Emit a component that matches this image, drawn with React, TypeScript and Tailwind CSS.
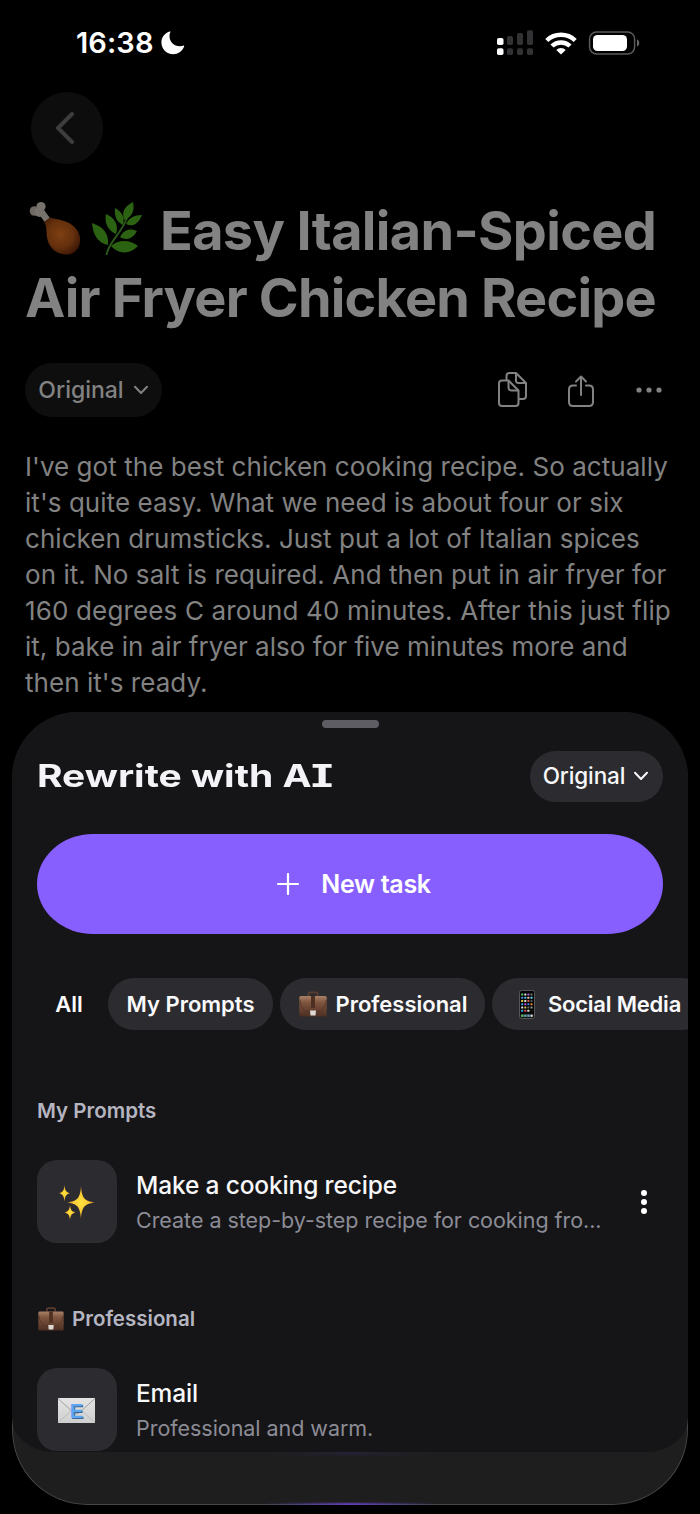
import React from 'react';
import clsx from 'clsx';

const Chevron: React.FC<{ className?: string }> = ({ className }) => (
  <svg viewBox="0 0 16 10" className={clsx('w-4 h-2.5', className)} fill="none" stroke="currentColor" strokeWidth="2" strokeLinecap="round" strokeLinejoin="round">
    <path d="M2 1.8 8 8 14 1.8" />
  </svg>
);

const Drumstick = () => (
  <svg viewBox="0 0 54 56" className="w-[54px] h-14" fill="none">
    <defs>
      <radialGradient id="meat" cx="0.45" cy="0.45" r="0.6">
        <stop offset="0" stopColor="#7d4012" />
        <stop offset="0.6" stopColor="#65300d" />
        <stop offset="1" stopColor="#3e1806" />
      </radialGradient>
    </defs>
    <path d="M11 9 19 20" stroke="#77726c" strokeWidth="6.5" />
    <circle cx="12" cy="5.500" r="4.600" fill="#77726c" />
    <circle cx="5.500" cy="10" r="4.800" fill="#6f6962" />
    <circle cx="10.500" cy="11" r="5" fill="#77726c" />
    <path d="M21 16.500C31 19 43 20 49 30.500 54 40 50 50 42 53c-9 2-18-2-22-10-4-9-1-17-5-22z" fill="url(#meat)" />
  </svg>
);

const Herb = () => (
  <svg viewBox="0 0 52 56" className="w-[52px] h-14" fill="none">
    <path d="M15.500 54C17 42 30 33 36 17" stroke="#29551a" strokeWidth="2" />
    <g fill="#2b6312">
      <path d="M42 1C32 6 31 12 33 19c8-3 11-9 9-18z" />
      <path d="M24 7c-1 9 2 14 8 17 2-8-1-13-8-17z" />
      <path d="M15 13c-2 10 3 17 10 20 3-9-1-16-10-20z" />
      <path d="M1 22c1 12 6 20 16 22 1-11-4-18-16-22z" />
      <path d="M51 14c-8 0-13 3-16 9 6 3 12 1 16-9z" />
      <path d="M46 30c-6-3-13-2-17 6 6 4 13 2 17-6z" />
      <path d="M47 45c-9-7-20-6-27 0 7 8 19 9 27 0z" />
    </g>
  </svg>
);

const Briefcase: React.FC<{ className?: string }> = ({ className }) => (
  <svg viewBox="0 0 28 26" className={className} fill="none">
    <defs>
      <linearGradient id="leather" x1="0" y1="0" x2="0" y2="1">
        <stop offset="0" stopColor="#a98068" />
        <stop offset="0.3" stopColor="#80563f" />
        <stop offset="1" stopColor="#4d2e23" />
      </linearGradient>
    </defs>
    <path d="M9.500 5V2.500Q9.500 1.300 11 1.300h6q1.500 0 1.500 1.200V5" stroke="#5b3d30" strokeWidth="1.800" />
    <rect x="0.300" y="5" width="27.400" height="20.500" rx="1.500" fill="url(#leather)" />
    <path d="M1 9q1 11.500 9 12h8q8-.5 9-12" stroke="#4b2c20" strokeOpacity="0.600" />
    <rect x="12" y="5" width="4" height="12" fill="#4e2f22" />
    <path d="M11 19.500h6l-.5 5h-5z" fill="#dcd8d4" />
  </svg>
);

const phoneColors = ['#5fd068', '#e8e8e8', '#b36ad0', '#777777', '#3e8fe0', '#4ab8e0', '#e8c0a0', '#58d8e8', '#e8d040', '#e8e8e8', '#e05a50', '#555555', '#38a8e8', '#c050d8', '#4080e8', '#e88830', '#e8e8e8', '#d8c858', '#666666', '#999999', '#38a8e8', '#e05050', '#d8e8d8', '#151515'];

const Phone = () => (
  <svg viewBox="0 0 16 29" className="w-4 h-[29px] shrink-0" fill="none">
    <rect x="0.500" y="0.500" width="15" height="28" rx="2" fill="#050505" stroke="#55565a" />
    {phoneColors.map((c, i) => (
      <rect key={i} x={2.2 + (i % 4) * 3.1} y={3.6 + Math.floor(i / 4) * 3.25} width="2" height="2" rx="0.500" fill={c} />
    ))}
    <rect x="1.700" y="24.300" width="12.600" height="3" rx="0.600" fill="#44474a" />
    <path d="M2.300 25.800h2" stroke="#58d060" strokeWidth="2" />
    <path d="M5.400 25.800h2" stroke="#50b8b8" strokeWidth="2" />
    <path d="M8.500 25.800h2" stroke="#60a8d8" strokeWidth="2" />
    <path d="M11.600 25.800h2" stroke="#e8e8e8" strokeWidth="2" />
  </svg>
);

const Sparkles = () => (
  <svg viewBox="0 0 36 36" className="w-9 h-9 mt-0.5" fill="none">
    <defs>
      <radialGradient id="spark">
        <stop offset="0" stopColor="#ffe23e" />
        <stop offset="0.550" stopColor="#fbc934" />
        <stop offset="1" stopColor="#c07a22" />
      </radialGradient>
    </defs>
    <g fill="url(#spark)">
      <path d="M22 1c1 12 3 15 14 16.500C25 19 23 22 22 34 21 22 19 19 8 17.500 19 16 21 13 22 1z" />
      <path d="M5.500 0c.6 5.500 1.400 7 5.500 8.200C6.900 9.400 6.100 11 5.500 16.500 4.900 11 4.100 9.400 0 8.200 4.100 7 4.900 5.500 5.500 0z" />
      <path d="M11 20c.6 5 1.500 6.300 5.500 7.500-4 1.200-4.900 2.500-5.500 7.500-.6-5-1.500-6.300-5.500-7.500 4-1.200 4.900-2.500 5.500-7.500z" />
    </g>
  </svg>
);

const Envelope = () => (
  <div className="relative grid place-items-center mt-0.5 mr-px w-[37px] h-[25px] bg-linear-to-b from-[#e4e4e4] to-[#cfcfcf]">
    <svg viewBox="0 0 37 25" className="absolute inset-0" fill="none" stroke="#a2a2a2">
      <path d="M0 24.500 14 12M37 24.500 23 12" stroke="#bcbcbc" />
      <path d="M0 .5 16 15q2.500 2 5 0L37 .5" />
    </svg>
    <span className="relative font-['Liberation_Sans'] font-bold text-[20px] leading-none text-[#5ba5f2] [text-shadow:1px_1px_0_#3a6799]">E</span>
  </div>
);

const StatusBar = () => (
  <div className="flex items-center justify-between h-[86px] pl-[76px] pr-[60px] text-white">
    <div className="flex items-center gap-[7px]">
      <span className="text-[29px] font-semibold tracking-[0.100px]">16:38</span>
      <svg viewBox="0 0 24 24" className="w-6 h-6" fill="currentColor">
        <path d="M9.300 1.200C9.800.9 9.300.3 8.500.6 3.500 2.300.4 6.500.4 11.500.4 18 5.600 23.200 12 23.200c5 0 9.300-2.800 11.100-7.700.3-.8-.2-1.100-.9-.8-1 .3-2 .5-3.200.5-6.300 0-10.500-4.200-10.500-10.200 0-1.400.2-2.700.8-3.800z" />
      </svg>
    </div>
    <div className="flex items-center">
      <svg viewBox="0 0 36 26" className="w-9 h-[26px] mr-3" fill="#323234">
        <rect x="0" y="8" width="6.500" height="7" rx="1.800" fill="#fff" />
        <rect x="0" y="18.300" width="6.500" height="6.700" rx="1.800" fill="#fff" />
        <rect x="10" y="6" width="6" height="9" rx="1.800" />
        <rect x="10" y="18.300" width="6" height="6.700" rx="1.800" />
        <rect x="20" y="3" width="6" height="12" rx="1.800" />
        <rect x="20" y="18.300" width="6" height="6.700" rx="1.800" />
        <rect x="30" y="0.300" width="6" height="14.700" rx="1.800" />
        <rect x="30" y="18.300" width="6" height="6.700" rx="1.800" />
      </svg>
      <svg viewBox="0 0 32 24" className="w-8 h-6 mt-[-1px] mr-[11px]" fill="none" stroke="currentColor" strokeWidth="4.500">
        <path d="M1.800 9.500a20.500 20.500 0 0 1 28.400 0" />
        <path d="M7 15a13 13 0 0 1 18 0" />
        <path d="M11.300 19a6.700 6.700 0 0 1 9.400 0L16 23.600z" fill="currentColor" stroke="none" />
      </svg>
      <svg viewBox="0 0 52 24" className="w-[52px] h-6 mt-[-1px]" fill="none">
        <rect x="1.600" y="1" width="45" height="22" rx="7" stroke="#5a5a5c" strokeWidth="1.500" />
        <rect x="5" y="4" width="34" height="16" rx="4.500" fill="#fff" />
        <path d="M49 8.500c3 1 3 6 0 7z" fill="#69696b" />
      </svg>
    </div>
  </div>
);

const chips = [
  { label: 'All', box: 'w-[64px]' },
  { label: 'My Prompts', box: 'w-[165px] bg-[#2c2c30]' },
  { label: 'Professional', icon: <Briefcase className="w-7 h-[26px] shrink-0" />, box: 'w-[205px] pl-0.5 gap-2 bg-[#2c2c30]' },
  { label: 'Social Media', icon: <Phone />, box: 'w-[216px] gap-[13px] tracking-[-0.200px] bg-[#2c2c30]' },
];

interface PromptProps {
  icon: React.ReactNode;
  title: string;
  text: string;
  menu?: boolean;
}

const Prompt: React.FC<PromptProps> = ({ icon, title, text, menu }) => (
  <div className="flex items-center h-[83px]">
    <div className="grid place-items-center w-20 h-[83px] rounded-[20px] bg-[#2c2c30] shrink-0">{icon}</div>
    <div className="ml-[19px] mt-0.5 flex-1 whitespace-nowrap">
      <p className="text-[24.500px] leading-[35px] tracking-[-0.150px] font-medium text-[#f8f8fa]">{title}</p>
      <p className="text-[21.500px] leading-[34px] tracking-[-0.040px] text-[#8c8c96]">{text}</p>
    </div>
    {menu && (
      <div className="flex flex-col gap-[3px] w-[38px] items-center">
        <i className="size-1.5 rounded-full bg-white" />
        <i className="size-1.5 rounded-full bg-white" />
        <i className="size-1.5 rounded-full bg-white" />
      </div>
    )}
  </div>
);

const Sheet = () => (
  <section className="absolute left-3 top-[712px] w-[676px] h-[793px] overflow-hidden rounded-t-[66px] rounded-b-[75px] bg-[#1e1e1e]">
    {/* Frosted edge under the sheet */}
    <div className="absolute inset-x-0 top-1/2 bottom-0 rounded-b-[75px] border-b-[1.500px] border-x border-[#454545]" />
    <div className="absolute bottom-0 left-[240px] w-[196px] h-[3px] bg-linear-to-r from-transparent from-5% via-[#5e40b5] via-50% to-transparent to-95% [mask-image:linear-gradient(transparent,black_60%)]" />

    <div className="relative h-[740px] px-[25px] overflow-hidden rounded-[0_0_42px_42px/0_0_34px_34px] bg-[#151517]">
      <div className="mx-auto mt-2 w-[57px] h-2 rounded-full bg-[#5d5d63]" />

      <div className="mt-[23px] flex items-center justify-between h-[51px]">
        <h2 className="w-[297px] origin-left scale-x-[1.257] whitespace-nowrap text-[31px] font-bold text-[#f4f4f8]">
          Rewrite with A<span className="inline-block origin-left scale-x-[1.200] [font-feature-settings:'cv08','ss02']">I</span>
        </h2>
        <button className="flex items-center justify-center gap-2 w-[133px] h-[51px] rounded-full bg-[#2c2c30] text-[22.500px] tracking-[-0.100px] font-medium text-[#f8f8fa] pr-px pb-px">
          Original
          <Chevron />
        </button>
      </div>

      <button className="mt-8 flex items-center justify-center w-full h-[100px] rounded-[56px/50px] bg-[#885fff] text-[25px] font-semibold tracking-[-0.300px] text-white pl-2">
        <svg viewBox="0 0 22 22" className="w-[22px] h-[22px] mr-[22px]" fill="none" stroke="currentColor" strokeWidth="2.200" strokeLinecap="round">
          <path d="M11 1v20M1 11h20" />
        </svg>
        <span className="pt-0.5">New task</span>
      </button>

      <div className="mt-[44px] flex gap-[7px] w-[720px] h-[52px]">
        {chips.map((chip) => (
          <button key={chip.label} className={clsx('flex items-center justify-center shrink-0 h-[52px] rounded-full text-[22px] font-semibold whitespace-nowrap text-[#fafafc]', chip.box)}>
            {chip.icon}
            {chip.label}
          </button>
        ))}
      </div>

      <h3 className="mt-[66px] h-[30px] leading-[30px] text-[20.500px] font-semibold text-[#b5b5c1]">My Prompts</h3>
      <div className="mt-[34px]">
        <Prompt icon={<Sparkles />} title="Make a cooking recipe" text="Create a step-by-step recipe for cooking fro..." menu />
      </div>

      <h3 className="mt-[61px] flex items-center gap-2 h-[30px] pl-px leading-[30px] text-[20.500px] font-semibold text-[#b5b5c1]">
        <Briefcase className="w-[26px] h-6" />
        Professional
      </h3>
      <div className="mt-[34px]">
        <Prompt icon={<Envelope />} title="Email" text="Professional and warm." />
      </div>
    </div>

    <div className="absolute top-[740px] left-[250px] w-[176px] h-[6px] bg-linear-to-r from-transparent via-[#272238] to-transparent [mask-image:linear-gradient(black,transparent)]" />
  </section>
);

const App: React.FC = () => {
  return (
    <div className="relative w-[700px] h-[1514px] overflow-hidden bg-black font-['Inter',sans-serif]">
      <StatusBar />

      <main className="pl-[25px] pr-4">
        <button className="mt-1.5 ml-1.5 grid place-items-center w-[72px] h-[72px] rounded-full bg-[#0d0d0d] text-[#3d3d3d]">
          <svg viewBox="0 0 20 32" className="w-5 h-8 -ml-1" fill="none" stroke="currentColor" strokeWidth="4" strokeLinecap="round" strokeLinejoin="round">
            <path d="M17 2 3 16l14 14" />
          </svg>
        </button>

        <h1 className="mt-[33px] text-[54px] leading-[67px] font-bold text-[#828282] whitespace-nowrap">
          <span className="flex items-center h-[67px]">
            <span className="flex gap-2 ml-1 mr-[17px] -mt-1">
              <Drumstick />
              <Herb />
            </span>
            <span className="tracking-[-0.650px]">Easy Italian-Spiced</span>
          </span>
          <span className="block tracking-[-0.800px]">Air Fryer Chicken Recipe</span>
        </h1>

        <div className="mt-8 flex items-center justify-between h-[54px] text-[#828282]">
          <button className="flex items-center justify-center gap-[9px] w-[137px] h-[54px] rounded-full bg-[#0e0e0e] text-[23px] font-medium">
            Original
            <Chevron />
          </button>
          <div className="flex items-center pr-[22px]">
            <svg viewBox="0 0 30 36" className="w-[30px] h-9 mr-10" fill="none" stroke="currentColor" strokeWidth="2" strokeLinejoin="round">
              <path d="M4 8.500h6.500l10 10V31q0 3-3 3H4q-3 0-3-3V11.500q0-3 3-3z" />
              <path d="M10.500 8.500v7q0 3 3 3h7" />
              <path d="M8.500 8V4q0-3 3-3H18l10 10v13q0 3-3 3h-4" />
              <path d="M18 1v7.500q0 2.500 2.500 2.500H28" />
            </svg>
            <svg viewBox="0 0 26 32" className="w-[26px] h-8 mr-[42px] mt-0.5" fill="none" stroke="currentColor" strokeWidth="2" strokeLinecap="round" strokeLinejoin="round">
              <path d="M8 10.500H5q-4 0-4 4V27q0 4 4 4h16q4 0 4-4V14.500q0-4-4-4h-3" />
              <path d="M13 20V1.500M8 6.500l5-5 5 5" />
            </svg>
            <svg viewBox="0 0 26 6" className="w-[26px] h-1.5" fill="currentColor">
              <circle cx="3" cy="3" r="2.600" />
              <circle cx="13" cy="3" r="2.600" />
              <circle cx="23" cy="3" r="2.600" />
            </svg>
          </div>
        </div>

        <p className="mt-[32px] text-[26px] leading-9 tracking-[0.050px] text-[#828282] whitespace-nowrap">
          I've got the best chicken cooking recipe. So actually<br />
          it's quite easy. What we need is about four or six<br />
          chicken drumsticks. Just put a lot of Italian spices<br />
          on it. No salt is required. And then put in air fryer for<br />
          <span className="tracking-[0.150px]">160 degrees C around 40 minutes. After this just flip</span><br />
          <span className="tracking-[0.020px]">it, bake in air fryer also for five minutes more and</span><br />
          then it's ready.
        </p>
      </main>

      <Sheet />
    </div>
  );
};

export default App;
